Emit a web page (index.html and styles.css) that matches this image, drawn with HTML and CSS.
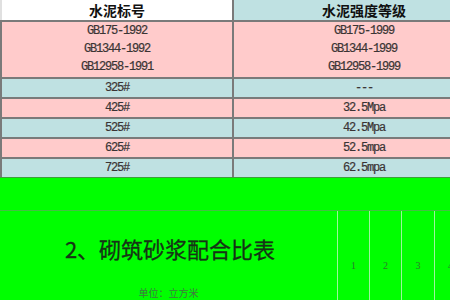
FILE: index.html
```html
<!DOCTYPE html>
<html lang="zh">
<head>
<meta charset="utf-8">
<link rel="stylesheet" href="styles.css">
</head>
<body>
<div class="sheet">
  <div class="table">
    <div class="row head">
      <div class="cell white">水泥标号</div>
      <div class="cell blue">水泥强度等级</div>
    </div>
    <div class="row multi">
      <div class="cell pink mono">GB175-1992<br>GB1344-1992<br>GB12958-1991</div>
      <div class="cell pink mono">GB175-1999<br>GB1344-1999<br>GB12958-1999</div>
    </div>
    <div class="row">
      <div class="cell blue mono">325#</div>
      <div class="cell blue mono">---</div>
    </div>
    <div class="row">
      <div class="cell pink mono">425#</div>
      <div class="cell pink mono">32.5Mpa</div>
    </div>
    <div class="row">
      <div class="cell blue mono">525#</div>
      <div class="cell blue mono">42.5Mpa</div>
    </div>
    <div class="row">
      <div class="cell pink mono">625#</div>
      <div class="cell pink mono">52.5mpa</div>
    </div>
    <div class="row">
      <div class="cell blue mono">725#</div>
      <div class="cell blue mono">62.5mpa</div>
    </div>
  </div>
  <div class="green">
    <div class="band"></div>
    <div class="lower">
      <div class="title-area">
        <div class="title">2、砌筑砂浆配合比表</div>
        <div class="unit">单位：立方米</div>
      </div>
      <div class="num">1</div>
      <div class="num">2</div>
      <div class="num">3</div>
      <div class="num">4</div>
    </div>
  </div>
</div>
</body>
</html>
```

FILE: styles.css
```css
html, body {
  margin: 0;
  padding: 0;
  background: #00ff00;
}
.sheet {
  width: 450px;
  height: 300px;
  overflow: hidden;
  font-family: "Noto Sans CJK SC", sans-serif;
}
.table {
  width: 494px;
}
.row {
  display: grid;
  grid-template-columns: 232px 262px;
  height: 18px;
  border-top: 2px solid #7a7a7a;
}
.row.head {
  border-top: none;
  height: 20px;
}
.row.multi {
  height: 55px;
}
.cell {
  border-left: 2px solid #7a7a7a;
  display: flex;
  align-items: center;
  justify-content: center;
  text-align: center;
  color: #3a3434;
  overflow: hidden;
}
.head .cell {
  font-weight: bold;
  font-size: 14px;
  color: #111;
  line-height: 20px;
}
.head .cell.white {
  border-left-color: #e0e0e0;
}
.white { background: #ffffff; }
.pink { background: #ffcbcb; }
.blue { background: #bfe1e2; }
.mono {
  font-family: "Liberation Mono", monospace;
  font-size: 12px;
  letter-spacing: -1.2px;
  line-height: 18px;
  -webkit-text-stroke: 0.2px #3a3434;
}
.multi .cell {
  align-items: flex-start;
}
.green {
  background: #00ff00;
  border-top: 1px solid #3ba03b;
  height: 122px;
}
.band {
  height: 32px;
  border-bottom: 1px solid #44c044;
}
.lower {
  display: flex;
  height: 89px;
  width: 480px;
}
.title-area {
  width: 337px;
  flex: none;
  display: flex;
  flex-direction: column;
  align-items: center;
}
.title {
  margin-top: 24px;
  font-size: 22px;
  line-height: 26px;
  color: #163316;
  padding-left: 3px;
  -webkit-text-stroke: 0.3px #163316;
}
.unit {
  margin-top: 26px;
  font-size: 10px;
  line-height: 12px;
  color: #3f7a3f;
}
.num {
  width: 32px;
  flex: none;
  border-left: 1px solid #9cf59c;
  font-family: "Liberation Serif", serif;
  font-size: 10px;
  color: #2d7a2d;
  text-align: center;
  padding-top: 49px;
  box-sizing: border-box;
  height: 89px;
}
.num:nth-child(4) { width: 33px; }
```
